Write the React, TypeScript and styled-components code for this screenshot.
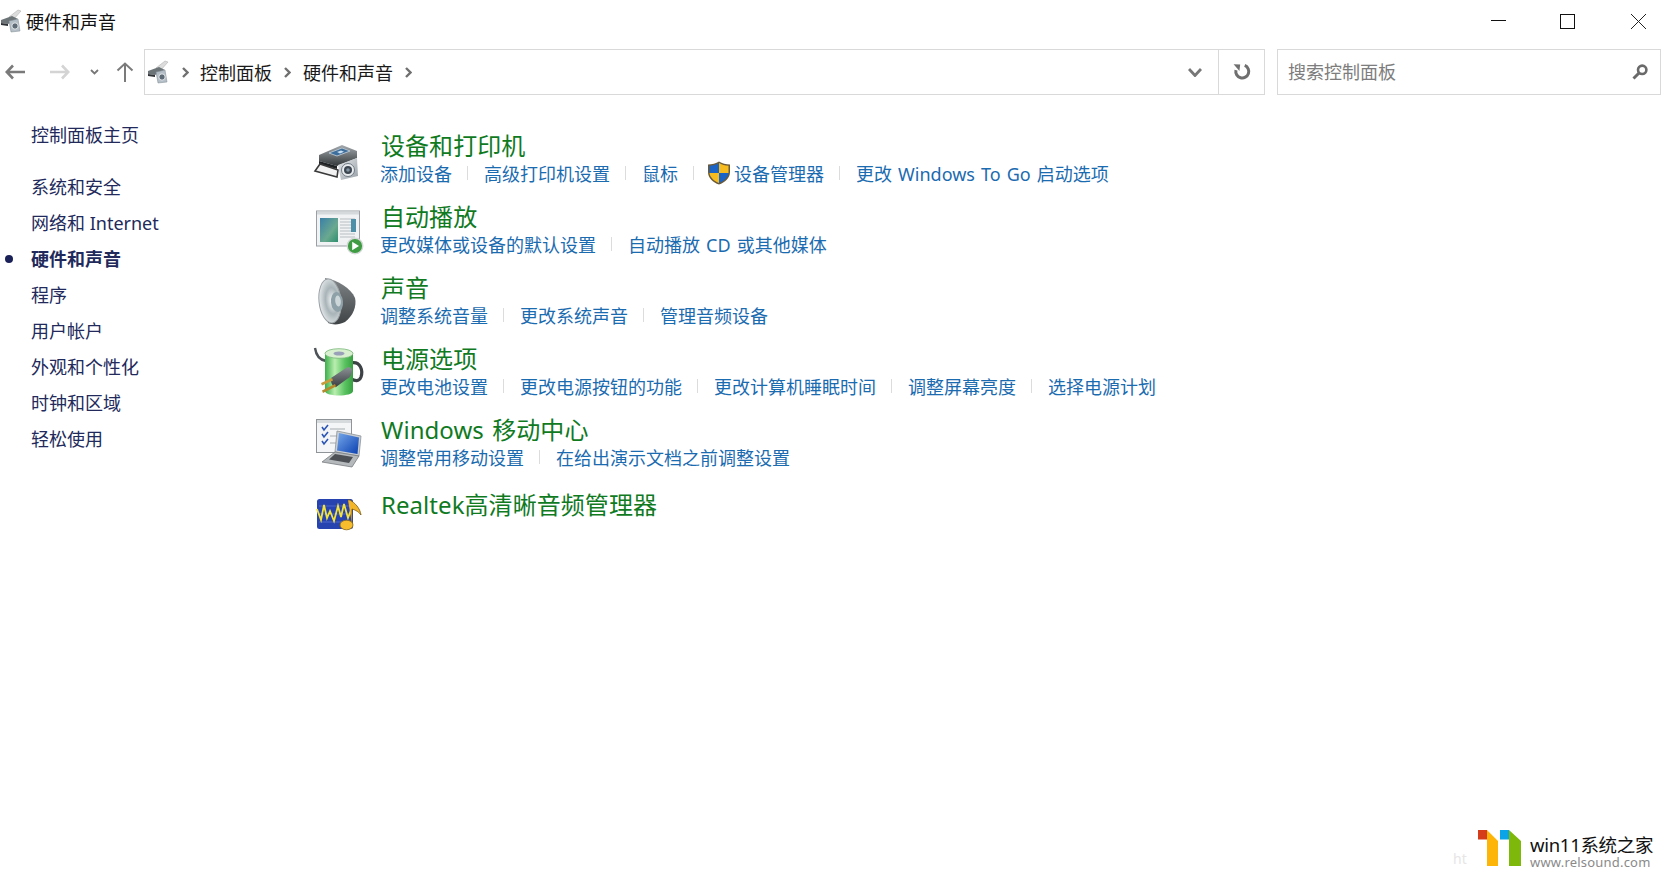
import React, { FC } from "react";
import styled, { createGlobalStyle } from "styled-components";

const GlobalStyle = createGlobalStyle`
    html, body {
        margin: 0;
        padding: 0;
        background: #fff;
        font-family: "Noto Sans", "Noto Sans CJK SC", sans-serif;
    }
`;

const Page = styled.div`
    position: relative;
    width: 1666px;
    height: 877px;
    overflow: hidden;
    background: #fff;
`;

const TitleBar = styled.div`
    display: flex;
    align-items: center;
    height: 42px;
`;
const TitleText = styled.div`
    margin-left: 2px;
    font-size: 18px;
    color: #111;
`;
const WindowButtons = styled.div`
    display: flex;
    align-items: center;
    margin-left: auto;
    margin-right: 20px;
    padding-top: 2px;
    gap: 54px;
`;

const NavBar = styled.div`
    display: flex;
    height: 46px;
    margin-top: 7px;
    padding-right: 5px;
`;
const NavButtons = styled.div`
    display: flex;
    align-items: center;
    width: 144px;
    padding-left: 5px;
    box-sizing: border-box;
    flex: none;
`;
const NavButton = styled.div<{ $w: number }>`
    display: flex;
    align-items: center;
    width: ${(p) => p.$w}px;
    flex: none;
`;
const AddressBar = styled.div`
    display: flex;
    align-items: center;
    flex: 1;
    border: 1px solid #d9d9d9;
    padding-left: 2px;
`;
const Crumb = styled.span`
    font-size: 18px;
    color: #1a1a1a;
`;
const CrumbArrow = styled.span<{ $first?: boolean }>`
    display: flex;
    margin: 0 ${(p) => (p.$first ? "11px" : "12px")};
`;
const AddressTools = styled.div`
    display: flex;
    align-self: stretch;
    margin-left: auto;
`;
const ToolCell = styled.div<{ $w: number; $line?: boolean }>`
    display: flex;
    align-items: center;
    justify-content: center;
    width: ${(p) => p.$w}px;
    border-left: ${(p) => (p.$line ? "1px solid #d9d9d9" : "none")};
`;
const SearchBox = styled.div`
    display: flex;
    align-items: center;
    width: 384px;
    margin-left: 12px;
    box-sizing: border-box;
    border: 1px solid #d9d9d9;
    padding: 0 12px 0 10px;
    flex: none;
`;
const SearchInput = styled.input`
    flex: 1;
    min-width: 0;
    border: none;
    outline: none;
    padding: 0;
    font-family: inherit;
    font-size: 18px;
    &::placeholder {
        color: #7d7d7d;
        opacity: 1;
    }
`;

const Body = styled.div`
    display: flex;
`;
const SideMenu = styled.div`
    width: 315px;
    flex: none;
    padding-top: 22px;
    box-sizing: border-box;
`;
const SideItem = styled.div<{ $active?: boolean; $home?: boolean }>`
    position: relative;
    height: 36px;
    line-height: 36px;
    padding-left: 31px;
    margin-bottom: ${(p) => (p.$home ? "16px" : "0")};
    font-size: 18px;
    font-weight: ${(p) => (p.$active ? 700 : 400)};
    color: #222a5c;
`;
const Bullet = styled.span`
    position: absolute;
    left: 5px;
    top: 14px;
    width: 8px;
    height: 8px;
    border-radius: 50%;
    background: #1a2058;
`;

const Content = styled.div`
    display: flex;
    flex-direction: column;
    gap: 13px;
    padding-top: 35px;
`;
const Category = styled.div<{ $solo?: boolean }>`
    display: grid;
    grid-template-columns: 48px 1fr;
    column-gap: 18px;
    height: 58px;
    padding-top: ${(p) => (p.$solo ? "4px" : "0")};
`;
const IconBox = styled.div<{ $solo?: boolean }>`
    width: 48px;
    height: 48px;
    margin-top: ${(p) => (p.$solo ? "1px" : "8px")};
    & > svg {
        display: block;
        overflow: visible;
    }
`;
const Heading = styled.div`
    height: 32px;
    line-height: 32px;
    font-size: 24px;
    color: #107a1f;
    white-space: nowrap;
    word-spacing: 2px;
    letter-spacing: 0.06px;
`;
const LinkRow = styled.div`
    display: flex;
    align-items: center;
    height: 26px;
    margin: -2px 0 0 -1px;
`;
const LinkItem = styled.span`
    display: flex;
    align-items: center;
    font-size: 18px;
    color: #1b6bb0;
    white-space: pre;
    word-spacing: 1.4px;
`;
const Separator = styled.span<{ $tight?: boolean }>`
    width: 1px;
    height: 14px;
    background: #dcdcdc;
    margin: 0 ${(p) => (p.$tight ? "13px" : "16px")} 0 15px;
`;
const ShieldSlot = styled.span`
    display: flex;
    margin-right: 3px;
`;

const Watermark = styled.div`
    position: absolute;
    left: 1453px;
    top: 830px;
    display: flex;
    align-items: flex-start;
`;
const FaintText = styled.span`
    font-size: 14px;
    color: #e6e6e6;
    margin-top: 19px;
    width: 25px;
`;
const BrandText = styled.div`
    margin-left: 9px;
    padding-top: 5px;
`;
const BrandName = styled.div`
    font-size: 18.5px;
    line-height: 20px;
    color: #111;
    letter-spacing: -0.3px;
    white-space: nowrap;
`;
const BrandUrl = styled.div`
    font-size: 13px;
    line-height: 15px;
    color: #8a8a8a;
    letter-spacing: 0.2px;
    white-space: nowrap;
`;

const SmallCpIcon: FC<{ size?: number }> = ({ size = 24 }) => (
    <svg width={size} height={size} viewBox="0 0 24 24">
        <path d="M9 8 L18 1 L21 2 L14 10Z" fill="#dcdcdc" stroke="#a8a8a8" strokeWidth="0.5" />
        <path d="M1 11 L12 7 L18 10 L8 15 L1 14Z" fill="#6d7478" />
        <path d="M1 14 L8 15 L8 17 L1 16Z" fill="#2e3236" />
        <path d="M9 12 L18 10 L20 22 L11 23Z" fill="#b4bec6" stroke="#7d8890" strokeWidth="0.5" />
        <circle cx="15" cy="17" r="3.2" fill="#5f6c78" stroke="#e8ecef" strokeWidth="1" />
    </svg>
);

const WinMin = () => (
    <svg width="15" height="16" viewBox="0 0 15 16">
        <path d="M0 6.5H15" stroke="#111" strokeWidth="1" />
    </svg>
);
const WinMax = () => (
    <svg width="15" height="16" viewBox="0 0 15 16">
        <rect x="0.5" y="0.5" width="14" height="14" fill="none" stroke="#111" strokeWidth="1" />
    </svg>
);
const WinClose = () => (
    <svg width="17" height="16" viewBox="0 0 17 16">
        <path d="M2 0L17 15M17 0L2 15" stroke="#222" strokeWidth="1" />
    </svg>
);

const ArrowLeft: FC<{ color: string }> = ({ color }) => (
    <svg width="20" height="16" viewBox="0 0 20 16">
        <path d="M8 1.5L1.8 8L8 14.5M2 8H20" fill="none" stroke={color} strokeWidth="2.6" />
    </svg>
);
const ArrowRight: FC<{ color: string }> = ({ color }) => (
    <svg width="20" height="16" viewBox="0 0 20 16">
        <path d="M12 1.5L18.2 8L12 14.5M18 8H0" fill="none" stroke={color} strokeWidth="2.6" />
    </svg>
);
const ArrowUp = () => (
    <svg width="18" height="20" viewBox="0 0 18 20">
        <path d="M1.5 8.5L9 1.5L16.5 8.5M9 2V20" fill="none" stroke="#7b7b7b" strokeWidth="2" />
    </svg>
);
const ChevronDown: FC<{ w: number; h: number; sw: number }> = ({ w, h, sw }) => (
    <svg width={w} height={h} viewBox={`0 0 ${w} ${h}`}>
        <path d={`M1 1L${w / 2} ${h - 1.5}L${w - 1} 1`} fill="none" stroke="#777" strokeWidth={sw} />
    </svg>
);
const CrumbChevron = () => (
    <svg width="7" height="11" viewBox="0 0 7 11">
        <path d="M1 1L5.5 5.5L1 10" fill="none" stroke="#707070" strokeWidth="2.4" />
    </svg>
);
const Refresh = () => (
    <svg width="18" height="18" viewBox="0 0 18 18">
        <path d="M4.5 4.5A6.5 6.5 0 1 0 14.5 4.5" fill="none" stroke="#6f6f6f" strokeWidth="3" transform="rotate(-28 9 9)" />
        <path d="M0.6 1.2L7.2 1.5L6.4 8Z" fill="#6f6f6f" />
    </svg>
);
const Magnifier = () => (
    <svg width="16" height="16" viewBox="0 0 16 16">
        <circle cx="10.2" cy="5.8" r="4.2" fill="none" stroke="#6a6a6a" strokeWidth="2.6" />
        <path d="M7 9L1.5 14.5" stroke="#6a6a6a" strokeWidth="3" />
    </svg>
);

const Shield = () => (
    <svg width="24" height="24" viewBox="0 0 24 24">
        <path d="M12 0.5C9 2.5 5 3.5 1 3.5V11C1 17 6 21.5 12 23.5C18 21.5 23 17 23 11V3.5C19 3.5 15 2.5 12 0.5Z" fill="#6b5a3a" />
        <path d="M12 2V12H2.5V4.7C6 4.6 9.5 3.6 12 2Z" fill="#1b63c4" />
        <path d="M12 2C14.5 3.6 18 4.6 21.5 4.7V12H12Z" fill="#f6bb1f" />
        <path d="M2.5 12H12V22C7 20 3 16.5 2.5 12Z" fill="#f6bb1f" />
        <path d="M12 12H21.5C21 16.5 17 20 12 22Z" fill="#1b63c4" />
    </svg>
);

const PrinterIcon = () => (
    <svg width="48" height="48" viewBox="0 0 48 48">
        <defs>
            <linearGradient id="prBody" x1="0" y1="0" x2="0" y2="1">
                <stop offset="0" stopColor="#a5abaf" />
                <stop offset="1" stopColor="#33373a" />
            </linearGradient>
            <linearGradient id="camBody" x1="0" y1="0" x2="1" y2="1">
                <stop offset="0" stopColor="#e6e9eb" />
                <stop offset="1" stopColor="#98a1a8" />
            </linearGradient>
        </defs>
        <path d="M4 17L27 7L42 13L42 20L22 28L4 23Z" fill="url(#prBody)" />
        <path d="M14 15L27 10L35 13L22 18Z" fill="#3e6f9c" stroke="#c5d0d8" strokeWidth="0.8" />
        <path d="M22 14L26 12.5L29 13.8L25 15.5Z" fill="#c9dff2" />
        <path d="M4 23L22 28L22 31L4 26Z" fill="#1f2224" />
        <path d="M5 26L0 33L22 39L23 32Z" fill="#f2f2f2" stroke="#3a3a3a" strokeWidth="1.6" />
        <path d="M23 27L42 20L43 38L26 42Z" fill="url(#camBody)" />
        <circle cx="33" cy="32" r="6.5" fill="#e9ecee" stroke="#707a82" strokeWidth="1" />
        <circle cx="33" cy="32" r="4" fill="#3c4650" />
        <circle cx="33" cy="32" r="1.8" fill="#80919f" />
    </svg>
);

const AutoPlayIcon = () => (
    <svg width="48" height="48" viewBox="0 0 48 48">
        <defs>
            <linearGradient id="apPane" x1="0" y1="0" x2="1" y2="1">
                <stop offset="0" stopColor="#3a7fa8" />
                <stop offset="0.6" stopColor="#6aa98f" />
                <stop offset="1" stopColor="#2f8f70" />
            </linearGradient>
        </defs>
        <rect x="1.5" y="2" width="43" height="35" fill="#f0f2f4" stroke="#9a9fa3" strokeWidth="1" />
        <rect x="2" y="2.5" width="42" height="3" fill="#d6d9dc" />
        <rect x="5" y="9" width="18" height="24" fill="url(#apPane)" />
        <path d="M25 10H40M25 13H40M25 16H40M25 19H40M25 22H40M25 25H40M25 28H40" stroke="#b9bec2" strokeWidth="1" />
        <rect x="36" y="10" width="5" height="13" fill="#4d90a8" />
        <circle cx="40" cy="37" r="7.8" fill="#3f9c42" stroke="#d4d8d8" strokeWidth="1.4" />
        <path d="M37.2 32.8L44 37L37.2 41.2Z" fill="#fff" />
    </svg>
);

const SpeakerIcon = () => (
    <svg width="48" height="48" viewBox="0 0 48 48">
        <defs>
            <radialGradient id="spkCone" cx="0.6" cy="0.5" r="0.6">
                <stop offset="0" stopColor="#f4f7f8" />
                <stop offset="0.5" stopColor="#a8b4b8" />
                <stop offset="1" stopColor="#e6eaec" />
            </radialGradient>
            <linearGradient id="spkBack" x1="0" y1="0" x2="0" y2="1">
                <stop offset="0" stopColor="#7f8487" />
                <stop offset="1" stopColor="#3f4346" />
            </linearGradient>
        </defs>
        <path d="M10 -2C22 0 36 8 40 18C42 26 38 36 30 42C24 45 18 45 13 43Z" fill="url(#spkBack)" />
        <ellipse cx="15" cy="21" rx="11" ry="22" transform="rotate(-6 15 21)" fill="url(#spkCone)" stroke="#9aa1a5" strokeWidth="1" />
        <ellipse cx="22" cy="22" rx="6" ry="10" transform="rotate(-6 22 22)" fill="#8fa1a8" />
        <ellipse cx="23" cy="21" rx="2.8" ry="5.5" transform="rotate(-6 23 21)" fill="#cdd7da" />
    </svg>
);

const BatteryIcon = () => (
    <svg width="48" height="48" viewBox="0 0 48 48">
        <defs>
            <linearGradient id="batBody" x1="0" y1="0" x2="1" y2="0">
                <stop offset="0" stopColor="#3cb04a" />
                <stop offset="0.35" stopColor="#b9eeb0" />
                <stop offset="0.7" stopColor="#5cc462" />
                <stop offset="1" stopColor="#35a040" />
            </linearGradient>
            <linearGradient id="plugBody" x1="0" y1="0" x2="0" y2="1">
                <stop offset="0" stopColor="#8a9094" />
                <stop offset="1" stopColor="#3a3e42" />
            </linearGradient>
        </defs>
        <path d="M0 -3C1 4 5 9 11 10" fill="none" stroke="#4d5358" strokeWidth="2.4" />
        <path d="M36 12C46 10 48 20 46 26C44 31 40 30 36 28" fill="none" stroke="#3d4246" strokeWidth="3.2" />
        <path d="M10 2C10 -1 38 -1 38 2V40C38 46 10 46 10 40Z" fill="url(#batBody)" />
        <ellipse cx="24" cy="2.5" rx="14" ry="4.8" fill="#d8efd0" stroke="#79b878" strokeWidth="0.8" />
        <ellipse cx="24" cy="2.5" rx="5.5" ry="2" fill="#9aa0b8" />
        <path d="M16 27L31 17C34 15 38 17 37 21L36 24C35 26 34 27 32 28L21 36C19 37 15 32 16 27Z" fill="url(#plugBody)" />
        <path d="M6 32L17 27L18 29.5L7 34.5Z" fill="#c99b3a" />
        <path d="M7 39.5L20 33L21 35.5L8 42Z" fill="#b58a2c" />
    </svg>
);

const MobilityIcon = () => (
    <svg width="48" height="48" viewBox="0 0 48 48">
        <defs>
            <linearGradient id="lapScreen" x1="0" y1="0" x2="1" y2="1">
                <stop offset="0" stopColor="#76a8ea" />
                <stop offset="1" stopColor="#0a3fb0" />
            </linearGradient>
        </defs>
        <rect x="1.5" y="-2.5" width="35" height="33" fill="#f4f5f6" stroke="#8f9498" strokeWidth="1" />
        <rect x="2" y="-2" width="34" height="3" fill="#d7dadd" />
        <path d="M7 5L9 8L13 3M7 12L9 15L13 10M7 19L9 22L13 17" fill="none" stroke="#2b55b5" strokeWidth="1.6" />
        <path d="M15 7H30M15 14H28M15 21H26" stroke="#a8adb2" strokeWidth="1.2" />
        <path d="M22 9L46 14L44 34L20 30Z" fill="#c9ced2" stroke="#8d9398" strokeWidth="0.8" />
        <path d="M24 11L44 15.5L42.5 32L22 28.5Z" fill="url(#lapScreen)" />
        <path d="M20 30L44 34L37 45L7 40Z" fill="#b5b9bc" stroke="#777c80" strokeWidth="0.8" />
        <path d="M20 32L38 35L34 41L14 37.5Z" fill="#4d5155" />
    </svg>
);

const RealtekIcon = () => (
    <svg width="48" height="48" viewBox="0 0 48 48">
        <rect x="2" y="9" width="36" height="30" rx="2.5" fill="#2743b0" />
        <path d="M4 24H36M4 16H36M4 32H36" stroke="#5f7ad8" strokeWidth="0.7" />
        <path d="M2 19L6 30L9 15L12 28L15 21L19 31L23 16L26 27L29 14L33 28L36 20" fill="none" stroke="#f3e23a" strokeWidth="1.8" />
        <path d="M33 10L35 10C40 13 45 18 46 25C43 21 40 20 37 19L37 34" fill="#f3b52a" stroke="#7a5a10" strokeWidth="0.8" />
        <ellipse cx="31.5" cy="35" rx="6.5" ry="4.8" fill="#f7bd2d" stroke="#8a6914" strokeWidth="0.8" />
    </svg>
);

const BrandLogo = () => (
    <svg width="43" height="36" viewBox="0 0 43 36">
        <path d="M0 0H9L20 11V36H9V9H0Z" fill="#fdb607" />
        <rect x="0" y="0" width="9" height="9.5" fill="#d43c1a" />
        <path d="M22 0H31L43 11V36H31V9H22Z" fill="#7db80a" />
        <rect x="22" y="0" width="9" height="9.5" fill="#0ba4e8" />
    </svg>
);

type LinkDef = { text: string; shield?: boolean };
type CategoryDef = { title: string; icon: React.ReactNode; links: LinkDef[] };

const sideItems = ["系统和安全", "网络和 Internet", "硬件和声音", "程序", "用户帐户", "外观和个性化", "时钟和区域", "轻松使用"];

const categories: CategoryDef[] = [
    {
        title: "设备和打印机",
        icon: <PrinterIcon />,
        links: [
            { text: "添加设备" },
            { text: "高级打印机设置" },
            { text: "鼠标" },
            { text: "设备管理器", shield: true },
            { text: "更改 Windows To Go 启动选项" },
        ],
    },
    {
        title: "自动播放",
        icon: <AutoPlayIcon />,
        links: [{ text: "更改媒体或设备的默认设置" }, { text: "自动播放 CD 或其他媒体" }],
    },
    {
        title: "声音",
        icon: <SpeakerIcon />,
        links: [{ text: "调整系统音量" }, { text: "更改系统声音" }, { text: "管理音频设备" }],
    },
    {
        title: "电源选项",
        icon: <BatteryIcon />,
        links: [
            { text: "更改电池设置" },
            { text: "更改电源按钮的功能" },
            { text: "更改计算机睡眠时间" },
            { text: "调整屏幕亮度" },
            { text: "选择电源计划" },
        ],
    },
    {
        title: "Windows 移动中心",
        icon: <MobilityIcon />,
        links: [{ text: "调整常用移动设置" }, { text: "在给出演示文档之前调整设置" }],
    },
    { title: "Realtek高清晰音频管理器", icon: <RealtekIcon />, links: [] },
];

const App: FC = () => {
    return (
        <Page>
            <GlobalStyle />
            <TitleBar>
                <SmallCpIcon />
                <TitleText>硬件和声音</TitleText>
                <WindowButtons>
                    <WinMin />
                    <WinMax />
                    <WinClose />
                </WindowButtons>
            </TitleBar>
            <NavBar>
                <NavButtons>
                    <NavButton $w={45}>
                        <ArrowLeft color="#7a7a7a" />
                    </NavButton>
                    <NavButton $w={40}>
                        <ArrowRight color="#d4d4d4" />
                    </NavButton>
                    <NavButton $w={26}>
                        <ChevronDown w={9} h={6} sw={1.8} />
                    </NavButton>
                    <NavButton $w={28}>
                        <ArrowUp />
                    </NavButton>
                </NavButtons>
                <AddressBar>
                    <SmallCpIcon />
                    <CrumbArrow $first>
                        <CrumbChevron />
                    </CrumbArrow>
                    <Crumb>控制面板</Crumb>
                    <CrumbArrow>
                        <CrumbChevron />
                    </CrumbArrow>
                    <Crumb>硬件和声音</Crumb>
                    <CrumbArrow>
                        <CrumbChevron />
                    </CrumbArrow>
                    <AddressTools>
                        <ToolCell $w={47}>
                            <ChevronDown w={14} h={9} sw={2.8} />
                        </ToolCell>
                        <ToolCell $w={45} $line>
                            <Refresh />
                        </ToolCell>
                    </AddressTools>
                </AddressBar>
                <SearchBox>
                    <SearchInput placeholder="搜索控制面板" readOnly />
                    <Magnifier />
                </SearchBox>
            </NavBar>
            <Body>
                <SideMenu>
                    <SideItem $home>控制面板主页</SideItem>
                    {sideItems.map((item) => (
                        <SideItem key={item} $active={item === "硬件和声音"}>
                            {item === "硬件和声音" && <Bullet />}
                            {item}
                        </SideItem>
                    ))}
                </SideMenu>
                <Content>
                    {categories.map((cat) => {
                        const solo = cat.links.length === 0;
                        return (
                            <Category key={cat.title} $solo={solo}>
                                <IconBox $solo={solo}>{cat.icon}</IconBox>
                                <div>
                                    <Heading>{cat.title}</Heading>
                                    {!solo && (
                                        <LinkRow>
                                            {cat.links.map((link, i) => (
                                                <React.Fragment key={link.text}>
                                                    {i > 0 && <Separator $tight={link.shield} />}
                                                    <LinkItem>
                                                        {link.shield && (
                                                            <ShieldSlot>
                                                                <Shield />
                                                            </ShieldSlot>
                                                        )}
                                                        {link.text}
                                                    </LinkItem>
                                                </React.Fragment>
                                            ))}
                                        </LinkRow>
                                    )}
                                </div>
                            </Category>
                        );
                    })}
                </Content>
            </Body>
            <Watermark>
                <FaintText>ht</FaintText>
                <BrandLogo />
                <BrandText>
                    <BrandName>win11系统之家</BrandName>
                    <BrandUrl>www.relsound.com</BrandUrl>
                </BrandText>
            </Watermark>
        </Page>
    );
};

export default App;
